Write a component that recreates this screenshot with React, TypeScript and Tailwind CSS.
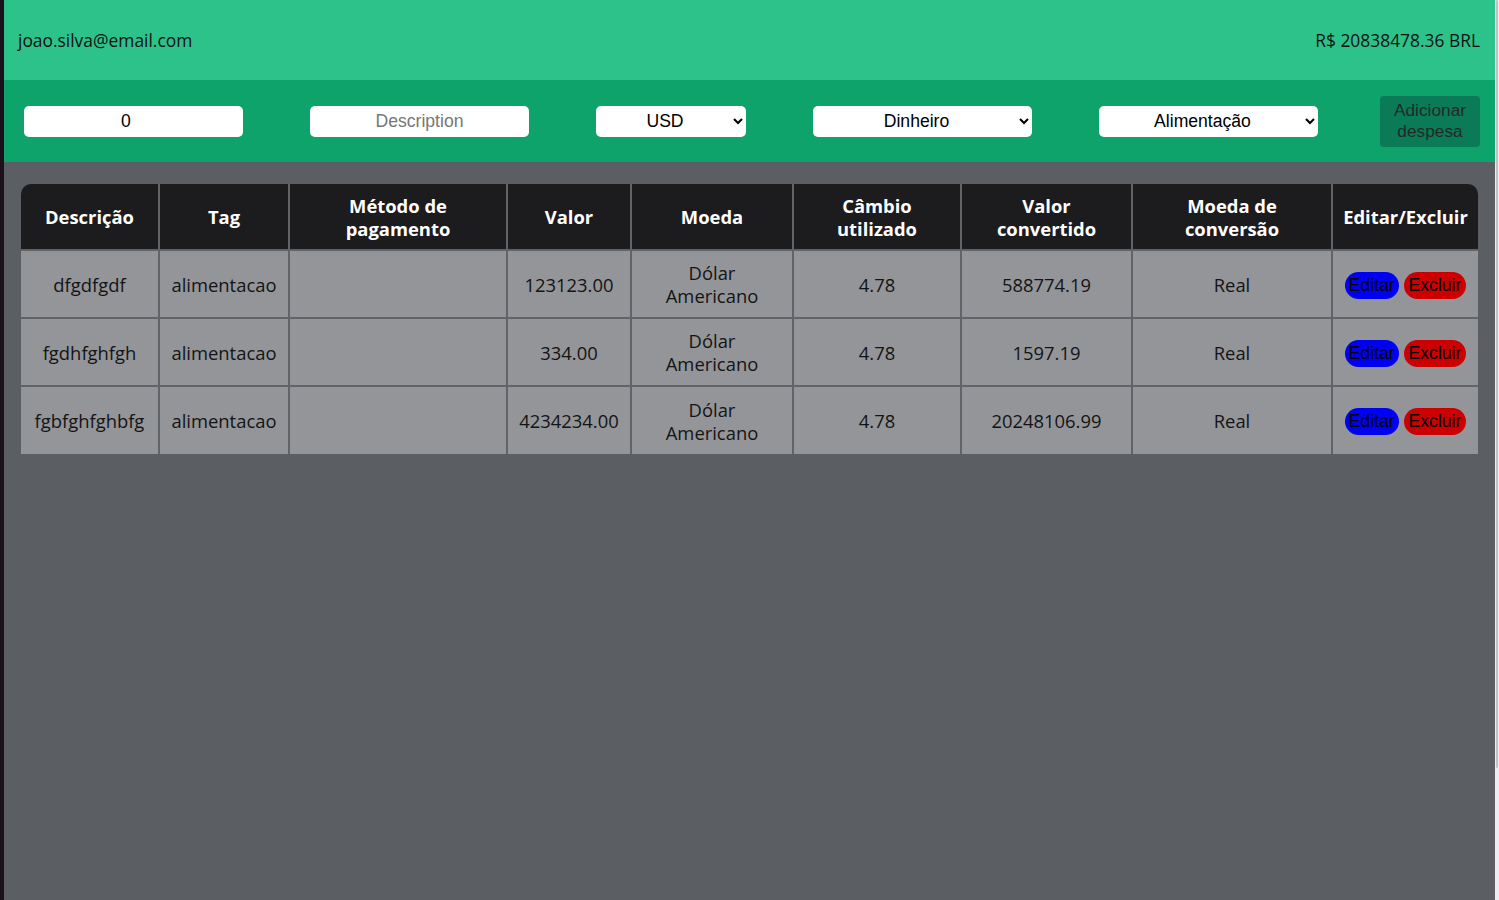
import { ChangeEvent, useState } from "react";

type Expense = {
  id: number;
  description: string;
  tag: string;
  method: string;
  value: string;
  currency: string;
  rate: string;
  converted: string;
  target: string;
};

const expenses: Expense[] = [
  {
    id: 0,
    description: "dfgdfgdf",
    tag: "alimentacao",
    method: "",
    value: "123123.00",
    currency: "Dólar Americano",
    rate: "4.78",
    converted: "588774.19",
    target: "Real",
  },
  {
    id: 1,
    description: "fgdhfghfgh",
    tag: "alimentacao",
    method: "",
    value: "334.00",
    currency: "Dólar Americano",
    rate: "4.78",
    converted: "1597.19",
    target: "Real",
  },
  {
    id: 2,
    description: "fgbfghfghbfg",
    tag: "alimentacao",
    method: "",
    value: "4234234.00",
    currency: "Dólar Americano",
    rate: "4.78",
    converted: "20248106.99",
    target: "Real",
  },
];

const headers = [
  "Descrição",
  "Tag",
  "Método de pagamento",
  "Valor",
  "Moeda",
  "Câmbio utilizado",
  "Valor convertido",
  "Moeda de conversão",
  "Editar/Excluir",
];

// column widths taken from the layout (they add up to the table width)
const colWidths = [139, 130, 218, 124, 162, 168, 171, 200, 145];

const field =
  "h-[31px] w-[219px] shrink-0 rounded-[5px] border-0 bg-white text-center text-[17.6px] text-black outline-none [text-align-last:center]";

function Header() {
  return (
    <header className="flex h-[80px] items-center justify-between bg-[#2ec28b] pl-[14px] pr-[15px] text-[17.4px] text-[#111]">
      <p>joao.silva@email.com</p>
      <p>R$ 20838478.36 BRL</p>
    </header>
  );
}

function ExpenseForm() {
  const [value, setValue] = useState("0");
  const [description, setDescription] = useState("");

  return (
    <form
      className="flex h-[82px] items-center justify-between bg-[#0fa36c] pl-[20px] pr-[15px] font-['Liberation_Sans',Arial,sans-serif]"
      onSubmit={(e) => e.preventDefault()}
    >
      <div className="flex items-center gap-[67px]">
        <input
          className={field}
          type="number"
          value={value}
          onChange={(e: ChangeEvent<HTMLInputElement>) => setValue(e.target.value)}
        />
        <input
          className={`${field} placeholder:text-[#777]`}
          placeholder="Description"
          value={description}
          onChange={(e: ChangeEvent<HTMLInputElement>) =>
            setDescription(e.target.value)
          }
        />
        <select className={`${field} !w-[150px]`} defaultValue="USD">
          <option>USD</option>
          <option>CAD</option>
          <option>EUR</option>
        </select>
        <select className={field} defaultValue="Dinheiro">
          <option>Dinheiro</option>
          <option>Cartão de crédito</option>
          <option>Cartão de débito</option>
        </select>
        <select className={field} defaultValue="Alimentação">
          <option>Alimentação</option>
          <option>Lazer</option>
          <option>Trabalho</option>
          <option>Transporte</option>
          <option>Saúde</option>
        </select>
      </div>
      <button
        type="submit"
        className="h-[51px] w-[100px] shrink-0 rounded-[4px] bg-[#0b7a56] text-[17.3px] leading-[21px] text-[#222a26]"
      >
        Adicionar despesa
      </button>
    </form>
  );
}

function ExpenseTable() {
  return (
    <table className="w-[1457px] table-fixed border-separate border-spacing-0 text-[18.4px] leading-[23px]">
      <colgroup>
        {colWidths.map((w, i) => (
          <col key={i} style={{ width: w }} />
        ))}
      </colgroup>
      <thead>
        <tr>
          {headers.map((h, i) => (
            <th
              key={h}
              className={`h-[67px] border-b-2 border-[#606368] bg-[#1c1b1e] font-bold text-white ${
                i < headers.length - 1 ? "border-r-2 px-5" : "px-1"
              } ${i === 0 ? "rounded-tl-[10px]" : ""} ${
                i === headers.length - 1 ? "rounded-tr-[10px]" : ""
              }`}
            >
              {h}
            </th>
          ))}
        </tr>
      </thead>
      <tbody>
        {expenses.map((row, r) => {
          const cells = [
            row.description,
            row.tag,
            row.method,
            row.value,
            row.currency,
            row.rate,
            row.converted,
            row.target,
          ];
          const last = r === expenses.length - 1;
          return (
            <tr key={row.id}>
              {cells.map((c, i) => (
                <td
                  key={i}
                  className={`border-r-2 border-[#606368] bg-[#939599] text-center font-medium text-[#141414] ${
                    last ? "h-[67px]" : "h-[68px] border-b-2"
                  } ${i === 4 ? "px-6" : "px-1"}`}
                >
                  {c}
                </td>
              ))}
              <td
                className={`border-[#606368] bg-[#939599] text-center ${
                  last ? "h-[67px]" : "h-[68px] border-b-2"
                }`}
              >
                <div className="flex items-center justify-center gap-[5px] pt-[2px] font-['Liberation_Sans',Arial,sans-serif] text-[17.6px] leading-[27px] text-black">
                  <button type="button" className="h-[27px] rounded-full bg-[#0000f5] px-[4px]">
                    Editar
                  </button>
                  <button type="button" className="h-[27px] rounded-full bg-[#cc0000] px-[5px]">
                    Excluir
                  </button>
                </div>
              </td>
            </tr>
          );
        })}
      </tbody>
    </table>
  );
}

export default function App() {
  return (
    <div className="flex min-h-screen font-['Open_Sans','Noto_Sans',sans-serif]">
      <div className="w-[4px] shrink-0 bg-[#1b1118]" />
      <main className="flex min-w-0 flex-1 flex-col bg-[#5b5e63]">
        <Header />
        <ExpenseForm />
        <section className="px-[17px] pt-[22px]">
          <ExpenseTable />
        </section>
      </main>
      <div className="w-[4px] shrink-0 bg-[#ededf0]">
        <div className="ml-[1px] h-[768px] w-[2px] rounded-full bg-[#c2c2c6]" />
      </div>
    </div>
  );
}
